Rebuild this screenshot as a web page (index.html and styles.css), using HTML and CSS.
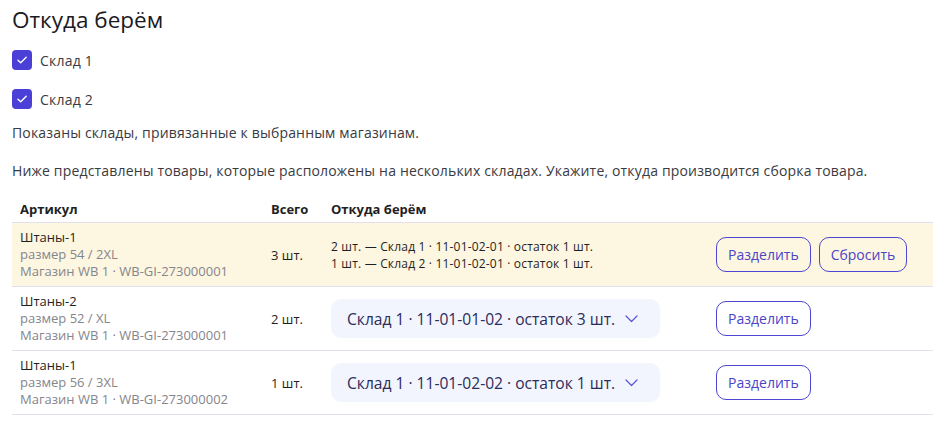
FILE: index.html
```html
<!DOCTYPE html>
<html lang="ru">
<head>
<meta charset="utf-8">
<link rel="stylesheet" href="styles.css">
</head>
<body>
<div class="page">
  <h1 class="title">Откуда берём</h1>
  <div class="checks">
    <label class="check"><span class="box"><svg viewBox="0 0 20 20" width="20" height="20"><path d="M6 10.2l2.7 2.6L14.2 7.3" fill="none" stroke="#fff" stroke-width="1.4" stroke-linecap="round" stroke-linejoin="round"/></svg></span>Склад 1</label>
    <label class="check"><span class="box"><svg viewBox="0 0 20 20" width="20" height="20"><path d="M6 10.2l2.7 2.6L14.2 7.3" fill="none" stroke="#fff" stroke-width="1.4" stroke-linecap="round" stroke-linejoin="round"/></svg></span>Склад 2</label>
  </div>
  <p class="note">Показаны склады, привязанные к выбранным магазинам.</p>
  <p class="note last">Ниже представлены товары, которые расположены на нескольких складах. Укажите, откуда производится сборка товара.</p>

  <div class="table">
    <div class="row head">
      <div class="cell">Артикул</div>
      <div class="cell">Всего</div>
      <div class="cell">Откуда берём</div>
      <div class="cell"></div>
    </div>
    <div class="row hl">
      <div class="cell item">
        <div class="name">Штаны-1</div>
        <div class="sub">размер 54 / 2XL</div>
        <div class="sub">Магазин WB 1 · WB-GI-273000001</div>
      </div>
      <div class="cell qty">3 шт.</div>
      <div class="cell split">
        <div>2 шт. — Склад 1 · 11-01-02-01 · остаток 1 шт.</div>
        <div>1 шт. — Склад 2 · 11-01-02-01 · остаток 1 шт.</div>
      </div>
      <div class="cell actions">
        <button class="btn">Разделить</button>
        <button class="btn">Сбросить</button>
      </div>
    </div>
    <div class="row">
      <div class="cell item">
        <div class="name">Штаны-2</div>
        <div class="sub">размер 52 / XL</div>
        <div class="sub">Магазин WB 1 · WB-GI-273000001</div>
      </div>
      <div class="cell qty">2 шт.</div>
      <div class="cell">
        <div class="select">Склад 1 · 11-01-01-02 · остаток 3 шт.<svg class="chev" viewBox="0 0 13 8" width="13" height="8"><path d="M1 1l5.5 5.5L12 1" fill="none" stroke="#5a55d6" stroke-width="1.2" stroke-linecap="round" stroke-linejoin="round"/></svg></div>
      </div>
      <div class="cell actions">
        <button class="btn">Разделить</button>
      </div>
    </div>
    <div class="row">
      <div class="cell item">
        <div class="name">Штаны-1</div>
        <div class="sub">размер 56 / 3XL</div>
        <div class="sub">Магазин WB 1 · WB-GI-273000002</div>
      </div>
      <div class="cell qty">1 шт.</div>
      <div class="cell">
        <div class="select">Склад 1 · 11-01-02-02 · остаток 1 шт.<svg class="chev" viewBox="0 0 13 8" width="13" height="8"><path d="M1 1l5.5 5.5L12 1" fill="none" stroke="#5a55d6" stroke-width="1.2" stroke-linecap="round" stroke-linejoin="round"/></svg></div>
      </div>
      <div class="cell actions">
        <button class="btn">Разделить</button>
      </div>
    </div>
  </div>
</div>
</body>
</html>
```

FILE: styles.css
```css
* { box-sizing: border-box; }
body {
  margin: 0;
  background: #fff;
  font-family: "Open Sans", "Noto Sans", sans-serif;
  color: #2e2e33;
}
.page {
  padding: 6px 12px 0 12px;
  width: 945px;
}
.title {
  margin: 0 0 16px 0;
  font-size: 22.5px;
  font-weight: 400;
  line-height: 28px;
  color: #1a1a1f;
}
.checks {
  display: flex;
  flex-direction: column;
  gap: 19px;
  margin-bottom: 15px;
}
.check {
  display: flex;
  align-items: center;
  gap: 8px;
  height: 20px;
  font-size: 14px;
  letter-spacing: 0.2px;
  color: #3a3a40;
}
.box {
  width: 20px;
  height: 20px;
  border-radius: 4px;
  background: #4a3fd6;
  display: flex;
}
.note {
  margin: 0 0 20px 0;
  font-size: 14px;
  line-height: 18px;
  letter-spacing: 0.17px;
  color: #3a3a40;
}
.note.last { margin-bottom: 15px; }
.table {
  margin-top: 0;
  width: 921px;
}
.row {
  display: grid;
  grid-template-columns: 251px 60px 385px 1fr;
  border-bottom: 1px solid #e2dfee;
  align-items: center;
}
.row.head {
  font-weight: 700;
  font-size: 13px;
  color: #1f1f24;
  height: 28px;
}
.row.hl { background: #fdf6e1; }
.cell {
  padding: 6px 8px;
}
.row.head .cell { padding-top: 0; padding-bottom: 0; }
.item { line-height: 17px; font-size: 13px; }
.name { color: #1f1f24; }
.sub { color: #85858c; }
.qty { font-size: 13px; color: #1f1f24; }
.split { font-size: 12px; line-height: 17px; letter-spacing: 0.18px; color: #1f1f24; }
.actions { display: flex; gap: 8px; }
.btn {
  font-family: inherit;
  font-size: 14px;
  color: #4a45c8;
  background: transparent;
  border: 1.5px solid #4c46d2;
  border-radius: 10px;
  height: 35px;
  padding: 0 11px;
}
.select {
  display: inline-flex;
  align-items: center;
  gap: 10px;
  height: 39px;
  padding: 0 22px 0 16px;
  background: #f2f5fe;
  border-radius: 10px;
  font-size: 15.6px;
  color: #2b2d5a;
}
```
